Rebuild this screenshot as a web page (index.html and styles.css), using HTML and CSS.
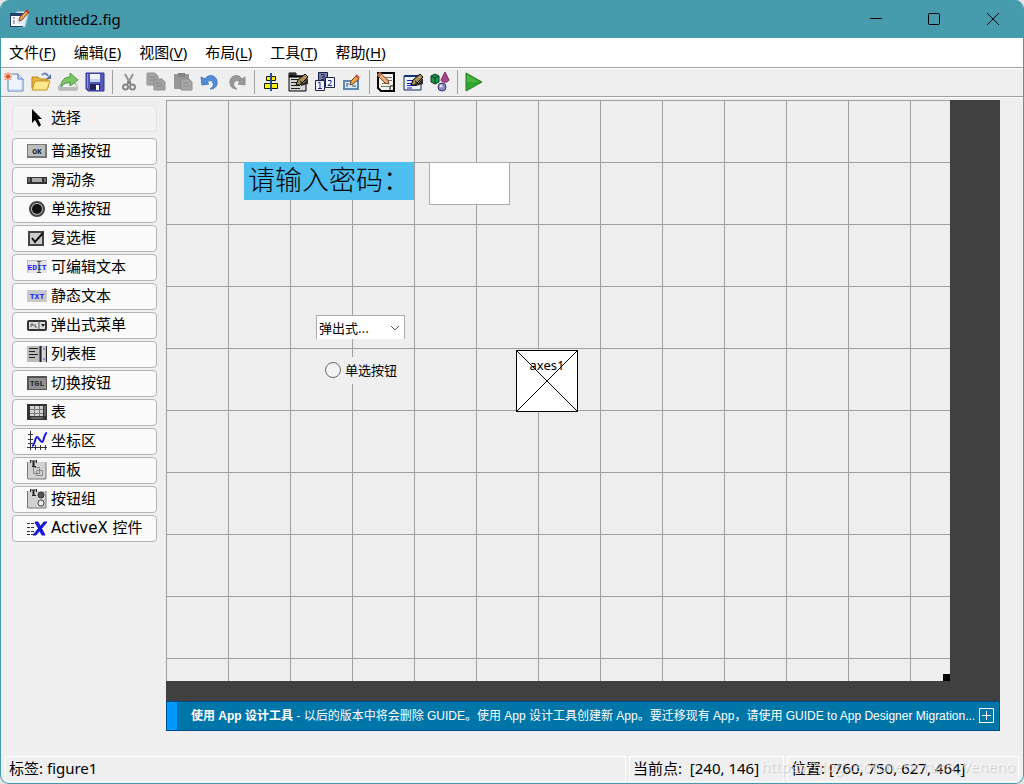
FILE: index.html
```html
<!DOCTYPE html>
<html lang="zh-CN">
<head>
<meta charset="utf-8">
<title>untitled2.fig</title>
<link rel="stylesheet" href="styles.css">
</head>
<body>
<div class="window">
  <header class="titlebar">
    <svg class="app-icon" viewBox="0 0 20 20"><path d="M6 3 19 2 15 18 8 18z" fill="#d7ecf6" stroke="#8fc3d8"/><path d="M0 4h13v14H0z" fill="#283f6d"/><path d="M1 7h12v10H1z" fill="#f7f9fc"/><path d="M3 9h2M3 12h2M3 14h2" stroke="#4c5a78"/><path d="M7 9h5v6H7z" fill="#dfe5ef"/><path d="m9 12 1-4 7-7 2 2-7 8z" fill="#f0a052" stroke="#7b4a2b"/><path d="m16 1 3 3" stroke="#a44440" stroke-width="2"/></svg>
    <h1 class="title">untitled2.fig</h1>
    <div class="window-controls">
      <button aria-label="最小化"><svg viewBox="0 0 14 14"><path d="M1 6.500h12"/></svg></button>
      <button aria-label="最大化"><svg viewBox="0 0 14 14"><rect x="1.500" y="1.500" width="11" height="11" rx="1"/></svg></button>
      <button aria-label="关闭"><svg viewBox="0 0 14 14"><path d="m1 1 12 12M13 1 1 13"/></svg></button>
    </div>
  </header>

  <nav class="menubar">
    <button>文件(<u>F</u>)</button>
    <button>编辑(<u>E</u>)</button>
    <button>视图(<u>V</u>)</button>
    <button>布局(<u>L</u>)</button>
    <button>工具(<u>T</u>)</button>
    <button>帮助(<u>H</u>)</button>
  </nav>

  <div class="toolbar">
    <div class="tool-group">
      <button aria-label="新建"><svg viewBox="0 0 20 20"><path d="M4 2h10l5 5v12H4z" fill="#eef4ff" stroke="#5a7fc0"/><path d="M14 2v5h5" fill="#c7dcf7" stroke="#5a7fc0"/><path d="M6 18h12V9" fill="none" stroke="#b9cdec"/><path d="M0 1h8v7H0z" fill="#f6d3bd"/><path d="M4 0v9M0 4.500h8M1 1l6 7M7 1 1 8" stroke="#e98a68"/><circle cx="4" cy="4.500" r="2" fill="#e25532"/></svg></button>
      <button aria-label="打开"><svg viewBox="0 0 20 20"><path d="M1 16V5h6l2 2h8v9z" fill="#e9b83c" stroke="#b8861b"/><path d="M4 9h15l-3 9H1z" fill="#ffe890" stroke="#c3921f"/><path d="M11 3c3-3 5-1 6 1" fill="none" stroke="#6888ae" stroke-width="2"/><path d="M20 2v5h-5z" fill="#56779f"/></svg></button>
      <button aria-label="导出"><svg viewBox="0 0 20 20"><path d="M1 18v-4l3-3h13l2 3v4z" fill="#f2f2f2" stroke="#999"/><path d="M2 15h16v3H2z" fill="#b9b9b9"/><path d="M3 15c0-7 4-10 9-10V1l8 7-8 6v-4c-4 0-6 2-9 5z" fill="#7bc763" stroke="#4d9447"/></svg></button>
      <button aria-label="保存"><svg viewBox="0 0 20 20"><path d="M1 1h18v18H3l-2-2z" fill="#5057bd" stroke="#34358a"/><path d="M5 2h10v8H5z" fill="#eef3fb"/><path d="M5 7h10v3H5z" fill="#c3d3f2"/><path d="M5 12h10v6H5z" fill="#25255e"/><path d="M11 13h3v5h-3z" fill="#fff"/><path d="M2.500 2v14" stroke="#8b93ed"/></svg></button>
    </div>
    <div class="tool-group">
      <button aria-label="剪切"><svg viewBox="0 0 20 20"><path d="m6 2 6 11M14 2 8 13" stroke="#969696" stroke-width="2"/><path d="M8 9h4v3H8z" fill="#858585"/><circle cx="6.500" cy="15" r="2.500" fill="none" stroke="#888" stroke-width="2"/><circle cx="13.500" cy="15" r="2.500" fill="none" stroke="#888" stroke-width="2"/></svg></button>
      <button aria-label="复制"><svg viewBox="0 0 20 20"><path d="M1 1h8l3 3v9H1z" fill="#a5a5a5" stroke="#969696"/><path d="M3 5h7M3 8h6" stroke="#8c8c8c"/><path d="M8 7h8l3 3v8H8z" fill="#a3a3a3" stroke="#909090"/><path d="M10 11h6M10 14h7" stroke="#888"/></svg></button>
      <button aria-label="粘贴"><svg viewBox="0 0 20 20"><rect x="1" y="2" width="15" height="15" rx="1" fill="#969696"/><path d="M5 1h7v4H5z" fill="#838383"/><path d="M8 7h8l3 3v8H8z" fill="#a8a8a8" stroke="#8c8c8c"/><path d="M10 11h5M10 14h7" stroke="#8c8c8c"/></svg></button>
      <button aria-label="撤销"><svg viewBox="0 0 20 20"><path d="M5 7c5-7 13-2 12 4 0 3-2 6-7 6 3-2 4-4 3-6-1-3-3-3-6-1l2 2-7 1-1-8z" fill="#528bd6" stroke="#4a77be"/></svg></button>
      <button aria-label="重做"><svg viewBox="0 0 20 20"><path d="M15 7C10 0 2 5 3 11c0 3 2 6 7 6-3-2-4-4-3-6 1-3 3-3 6-1l-2 2 7 1V5z" fill="#999" stroke="#8c8c8c"/></svg></button>
    </div>
    <div class="tool-group">
      <button aria-label="对齐对象"><svg viewBox="0 0 20 20"><path d="M5.500 4.500h9v4h-9z" fill="#fff000" stroke="#171700"/><path d="M3.500 11.500h13v5h-13z" fill="#ffef00" stroke="#171700"/><path d="M10 1v18" stroke="#234c9f" stroke-width="2"/></svg></button>
      <button aria-label="菜单编辑器"><svg viewBox="0 0 20 20"><path d="M1 1h7v3h10v15H1z" fill="#d5d5d5" stroke="#000"/><path d="M1 1h7v3H1z" fill="#333"/><path d="M1 4.500h18" stroke="#000" stroke-width="2"/><path d="M3 7.500h7M3 10.500h6M3 13.500h9M3 16.500h9" stroke="#222"/><path d="m8 13 2-5 7-6 3 3-8 8z" fill="#ad9256" stroke="#000"/><path d="m12 8 3 3 5-5v6l-7 2z" fill="#312c26"/></svg></button>
      <button aria-label="Tab 键顺序编辑器"><svg viewBox="0 0 20 20"><path d="M3.500.5h9v9h-9z" fill="#7a7d92" stroke="#172046"/><path d="M.5 8.500h9v10h-9zM10.500 5.500h9v10h-9z" fill="#f2f5ff" stroke="#1c2642"/><path d="m3 11 2-1v7M3 16.500h4M6 2.500h3v5H6M6 5h3M13 8.500h3v2l-3 3h4" fill="none" stroke="#23269a"/></svg></button>
      <button aria-label="工具栏编辑器"><svg viewBox="0 0 20 20"><path d="M2 9h14v8H2z" fill="#d9edfc" stroke="#6186b0" stroke-width="2"/><path d="M4 12h3M4 14h2M10 14h4" stroke="#275083"/><path d="m8 13 1-4 5-5 3 3-6 5z" fill="#eda844" stroke="#763f1c"/><path d="m14 3 3 3" stroke="#df4141" stroke-width="2"/></svg></button>
    </div>
    <div class="tool-group">
      <button aria-label="编辑器"><svg viewBox="0 0 20 20"><path d="M2 1h16v18H5l-3-3z" fill="#f6f3ea" stroke="#000" stroke-width="2"/><path d="M9 5.500h7M11 8.500h5M6 11.500h4M5 14.500h8" stroke="#777"/><path d="m1 3 3-2 8 7 1 4-4-1z" fill="#e8ae78" stroke="#763c24"/><path d="m2 4 3-3" stroke="#be6b46" stroke-width="3"/><path d="M14 18v-4h4" fill="#fff" stroke="#000"/></svg></button>
      <button aria-label="属性检查器"><svg viewBox="0 0 20 20"><path d="M1 4h17v14H1z" fill="#edf3ff" stroke="#16245b"/><path d="M1 4h17" stroke="#143471" stroke-width="2"/><path d="M4 8.500h6M4 11.500h5M4 13.500h9M4 16h5" stroke="#171fc0"/><path d="m8 13 2-5 7-6 3 3-8 8z" fill="#ad9256" stroke="#000"/><path d="m12 8 3 3 5-5v6l-7 2z" fill="#312c26"/></svg></button>
      <button aria-label="对象浏览器"><svg viewBox="0 0 20 20"><path d="m1 4 4-2 4 2v6l-4 2-4-2z" fill="#189756" stroke="#063c22"/><path d="m1 4 4 2 4-2M5 6v6" fill="none" stroke="#07351d"/><path d="m15 0 4 8c-1 3-7 3-8 0z" fill="#a94690" stroke="#75255f"/><circle cx="12" cy="15" r="4" fill="#888bc5" stroke="#353761"/><circle cx="11" cy="14" r="1.500" fill="#dfe1ff"/></svg></button>
    </div>
    <div class="tool-group">
      <button aria-label="运行"><svg viewBox="0 0 20 20"><path d="M2 1 18 10 2 19z" fill="#2fa72e" stroke="#278026"/><path d="M3 3 15 10H3z" fill="#64bf58" opacity=".55"/></svg></button>
    </div>
  </div>

  <main class="workspace">
    <aside class="palette">
      <button class="selected"><svg viewBox="0 0 20 18"><path d="m5 0 10 10h-4l3 6-2 2-4-7-3 3z" fill="#050505"/></svg>选择</button>
      <button><svg viewBox="0 0 20 18"><path d="M0 2h20v14H0z" fill="#777"/><path d="M1 3h17v11H1z" fill="#bdbdbd"/><text x="10" y="12" text-anchor="middle" class="tiny dark">OK</text></svg>普通按钮</button>
      <button><svg viewBox="0 0 20 18"><path d="M0 6h20v7H0z" fill="#333"/><path d="M5 7h10v4H5z" fill="#aaa"/><path d="M2 7v4M18 7v4" stroke="#aaa"/></svg>滑动条</button>
      <button><svg viewBox="0 0 20 18"><circle cx="10" cy="9" r="7" fill="#bbb" stroke="#444" stroke-width="2"/><circle cx="10" cy="9" r="5" fill="#111"/></svg>单选按钮</button>
      <button><svg viewBox="0 0 20 18"><path d="M2 3h14v13H2z" fill="#ccc" stroke="#444" stroke-width="2"/><path d="m5 9 3 4 8-9" fill="none" stroke="#111" stroke-width="2"/></svg>复选框</button>
      <button><svg viewBox="0 0 20 18"><path d="M0 2h20v13H0z" fill="#bbb"/><path d="M1 3h19v12H1z" fill="#e5e5e5"/><text x="10" y="12" text-anchor="middle" class="tiny blue">EDIT</text><path d="M10 3.500h4M12 3v12M10 14.500h4" stroke="#444"/></svg>可编辑文本</button>
      <button><svg viewBox="0 0 20 18"><path d="M0 3h20v12H0z" fill="#c9c9c9"/><text x="10" y="12" text-anchor="middle" class="tiny blue">TXT</text></svg>静态文本</button>
      <button><svg viewBox="0 0 20 18"><rect x="1" y="5" width="18" height="9" rx="1" fill="#ddd" stroke="#333" stroke-width="2"/><path d="M12 5v9M4 11V8h2v2M8 8v3h2" fill="none" stroke="#555"/><path d="M14 8h4l-2 3z" fill="#222"/></svg>弹出式菜单</button>
      <button><svg viewBox="0 0 20 18"><path d="M0 1h20v16H0z" fill="#bbb"/><path d="M2 3.500h9M2 6.500h6M2 9.500h9M2 12.500h6" stroke="#222"/><path d="M13.500 1v16" stroke="#222" stroke-width="2"/><path d="M15 2h3v14h-3z" fill="#d5d5d5"/><path d="M19.500 1v16" stroke="#222"/><path d="M16 4h2M16 14h2" stroke="#3344dd"/></svg>列表框</button>
      <button><svg viewBox="0 0 20 18"><path d="M0 2h20v14H0z" fill="#555"/><path d="M2 4h17v11H2z" fill="#929292"/><text x="10" y="12" text-anchor="middle" class="tiny dark">TGL</text></svg>切换按钮</button>
      <button><svg viewBox="0 0 20 18"><path d="M0 1h20v16H0z" fill="#333"/><path d="M3 3h13v10H3z" fill="#d4d4d4"/><path d="M7.500 3v10M12.500 3v10M3 6.500h13M3 10.500h13" stroke="#777"/><path d="M4 15h12M18 3v10" stroke="#999"/></svg>表</button>
      <button><svg viewBox="0 0 20 20"><path d="M3.500 0v19M0 16.500h20M1 3.500h5M1 8.500h5M1 12.500h5M8.500 14v5M13.500 14v5M18.500 14v5" stroke="#333"/><path d="M5 15c3 0 3-9 5-9s3 5 5 5 2-9 5-9" fill="none" stroke="#1515df" stroke-width="2"/></svg>坐标区</button>
      <button><svg viewBox="0 0 20 20"><path d="M0 2h19v17H1z" fill="#d1d1d1"/><path d="M.5 2v17M19 2v17H1" fill="none" stroke="#777"/><path d="M3 1h7M3.500 0v3M9.500 0v3M5 6.500h4" stroke="#222"/><path d="M6.500 1v6" stroke="#222" stroke-width="2"/><path d="M6.500 7.500h6v6h-6zM9.500 10.500h6v5h-6z" fill="none" stroke="#888"/></svg>面板</button>
      <button><svg viewBox="0 0 20 20"><path d="M0 2h19v17H1z" fill="#d1d1d1"/><path d="M.5 2v17M19 2v17H1" fill="none" stroke="#777"/><path d="M3 1h7M3.500 0v3M9.500 0v3M5 6.500h4" stroke="#222"/><path d="M6.500 1v6" stroke="#222" stroke-width="2"/><circle cx="14" cy="6" r="3" fill="#555" stroke="#333"/><circle cx="14" cy="14" r="3" fill="#eee" stroke="#444"/></svg>按钮组</button>
      <button><svg viewBox="0 0 20 18"><path d="M0 4.500h9M0 8.500h8M0 12.500h7M0 15.500h6" stroke="#333" stroke-dasharray="3 1"/><path d="M8 3h3l7 13h-3zM17 3h3L9 16H6z" fill="#1515dc" stroke="#1515dc"/></svg>ActiveX 控件</button>
    </aside>

    <section class="stage">
      <div class="desk">
        <div class="figure">
          <div class="item static-text">请输入密码：</div>
          <input class="item edit-box" type="text" aria-label="请输入密码">
          <div class="item popup">
            <select aria-label="弹出式菜单"><option>弹出式...</option></select>
            <svg viewBox="0 0 10 6"><path d="m1 1 4 4 4-4"/></svg>
          </div>
          <label class="item radio"><input type="radio" name="choice">单选按钮</label>
          <div class="item axes">
            <svg viewBox="0 0 60 60"><path d="m0 0 60 60M60 0 0 60"/></svg>
            <span>axes1</span>
          </div>
          <i class="item resize-handle"></i>
        </div>
      </div>
      <div class="banner">
        <p><b>使用 App 设计工具</b> - 以后的版本中将会删除 GUIDE。使用 App 设计工具创建新 App。要迁移现有 App，请使用 GUIDE to App Designer Migration...</p>
        <button aria-label="展开"><svg viewBox="0 0 15 15"><path d="M.5.5h14v14H.5zM3 7.500h9M7.500 3v9"/></svg></button>
      </div>
    </section>
  </main>

  <footer class="statusbar">
    <div class="cell tag">标签: figure1</div>
    <div class="cell point">当前点:&nbsp; [240, 146]</div>
    <div class="cell position">位置: [760, 750, 627, 464]</div>
    <span class="watermark">https://blog.csdn.net/Crush_Veneno</span>
  </footer>
</div>
</body>
</html>
```

FILE: styles.css
```css
* { box-sizing: border-box; }

body {
  margin: 0;
  background: #e4e4e4;
  color: #000;
  font: 15px/20px "Noto Sans", "Noto Sans CJK SC", sans-serif;
}

button {
  padding: 0;
  border: 0;
  background: none;
  color: inherit;
  font: inherit;
}

svg { display: block; }

.window {
  display: flex;
  flex-direction: column;
  min-height: 100vh;
  border: 1px solid #469bad;
  border-top: 0;
  border-radius: 9px;
  background: #efefef;
  overflow: hidden;
}

.titlebar {
  display: flex;
  align-items: center;
  height: 38px;
  padding-left: 9px;
  background: #469bad;
}

.app-icon { width: 20px; height: 20px; }

.title {
  flex: 1;
  margin: 0 0 0 5px;
  font-size: 15px;
  font-weight: 400;
}

.window-controls { display: flex; }

.window-controls button {
  display: grid;
  place-items: center;
  width: 58px;
  height: 38px;
}

.window-controls button:last-child { width: 60px; }

.window-controls svg {
  width: 14px;
  height: 14px;
  fill: none;
  stroke: #000;
}

.menubar {
  display: flex;
  gap: 18px;
  height: 30px;
  padding: 0 0 2px 8px;
  border-bottom: 1px solid #a0a0a0;
  background: #fff;
}

.menubar u { text-underline-offset: 2px; }

.toolbar {
  display: flex;
  align-items: center;
  height: 29px;
  padding-bottom: 2px;
  border-top: 1px solid #fff;
  border-bottom: 1px solid #a0a0a0;
}

.tool-group { display: flex; }

.tool-group + .tool-group {
  margin-left: 3px;
  padding-left: 3px;
  border-left: 1px solid #a0a0a0;
}

.toolbar button {
  display: grid;
  justify-items: start;
  align-items: center;
  width: 27px;
  height: 24px;
  padding-left: 3px;
}

.toolbar svg { width: 20px; height: 20px; }

.workspace {
  display: flex;
  flex: 1;
  padding: 2px 23px 25px 11px;
  border-top: 1px solid #fff;
}

.palette {
  display: flex;
  flex-direction: column;
  flex: none;
  gap: 2px;
  width: 145px;
  margin-right: 9px;
  padding-top: 5px;
  font-family: "DejaVu Sans", "Noto Sans CJK SC", sans-serif;
}

.palette button {
  display: flex;
  align-items: center;
  gap: 4px;
  height: 27px;
  padding: 0 0 2px 14px;
  border: 1px solid #b4b4b4;
  border-radius: 4px;
  background: #fafafa;
  white-space: nowrap;
}

.palette .selected {
  margin-bottom: 4px;
  border-color: #e2e2e2;
  background: #f2f2f2;
}

.palette svg { width: 20px; height: 20px; }

.tiny { font: bold 8px "Liberation Mono", monospace; }
.dark { fill: #222; }
.blue { fill: #1a1aff; }

.stage {
  display: flex;
  flex: 1;
  flex-direction: column;
  min-width: 0;
}

.desk {
  display: flex;
  flex: 1;
  padding: 0 50px 20px 0;
  background: #404040;
}

.figure {
  position: relative;
  flex: 1;
  background:
    linear-gradient(#9f9f9f 1px, transparent 1px) 0 0 / 62px 62px,
    linear-gradient(90deg, #9f9f9f 1px, #eee 1px) 0 0 / 62px 62px;
}

.item { position: absolute; }

.static-text {
  left: 78px;
  top: 62px;
  width: 170px;
  height: 38px;
  padding-left: 4px;
  background: #4dbeee;
  font: 300 27px/34px "Noto Sans CJK SC", sans-serif;
  white-space: nowrap;
}

.edit-box {
  left: 263px;
  top: 62px;
  width: 81px;
  height: 43px;
  border: 1px solid #abadb3;
  background: #fff;
}

.popup {
  left: 150px;
  top: 215px;
  width: 89px;
  height: 24px;
}

.popup select {
  width: 100%;
  height: 100%;
  padding: 0 2px;
  border: 1px solid #abadb3;
  border-bottom: 0;
  border-radius: 0;
  appearance: none;
  background: #fff;
  color: #000;
  font: 13px/20px "Noto Sans CJK SC", sans-serif;
}

.popup svg {
  position: absolute;
  right: 5px;
  top: 10px;
  width: 10px;
  height: 6px;
  fill: none;
  stroke: #555;
  pointer-events: none;
}

.radio {
  left: 158px;
  top: 257px;
  display: flex;
  align-items: center;
  gap: 4px;
  width: 76px;
  height: 27px;
  padding-bottom: 2px;
  background: #efefef;
  font-size: 13px;
  white-space: nowrap;
}

.radio input {
  flex: none;
  width: 16px;
  height: 16px;
  margin: 0 0 0 1px;
  border: 1px solid #666;
  border-radius: 50%;
  appearance: none;
  background: #f3f3f3;
}

.radio input:checked { background: #555; }

.axes {
  left: 350px;
  top: 250px;
  width: 62px;
  height: 62px;
  border: 1px solid #000;
  background: #fff;
  font: 13px/28px "Noto Sans", sans-serif;
  text-align: center;
}

.axes svg {
  position: absolute;
  inset: 0;
  stroke: #000;
}

.axes span { position: relative; }

.resize-handle {
  right: 0;
  bottom: 0;
  width: 7px;
  height: 7px;
  background: #000;
}

.banner {
  display: flex;
  align-items: center;
  height: 30px;
  padding-right: 5px;
  border: 1px solid #004b87;
  background: linear-gradient(90deg, #0099ff 10px, #0076a8 10px);
  color: #fff;
  font: 12px/16px "Liberation Sans", "Noto Sans CJK SC", sans-serif;
}

.banner p {
  flex: 1;
  min-width: 0;
  margin: 0;
  padding-left: 24px;
  overflow: hidden;
  text-overflow: ellipsis;
  white-space: nowrap;
}

.banner button { padding-bottom: 2px; }

.banner svg {
  width: 15px;
  height: 15px;
  fill: none;
  stroke: #fff;
}

.statusbar {
  position: relative;
  display: flex;
  gap: 3px;
  height: 27px;
  padding: 0 4px 1px;
}

.cell {
  padding-left: 3px;
  border: 1px solid #fff;
  line-height: 22px;
  white-space: nowrap;
}

.tag { flex: 1; }
.point { width: 155px; }
.position { width: 232px; }

.watermark {
  position: absolute;
  right: 8px;
  top: 0;
  color: rgba(255, 255, 255, 0.6);
  font: 15px/20px "Noto Sans", sans-serif;
  text-shadow: 1px 1px 1px rgba(0, 0, 0, 0.15);
}
```
